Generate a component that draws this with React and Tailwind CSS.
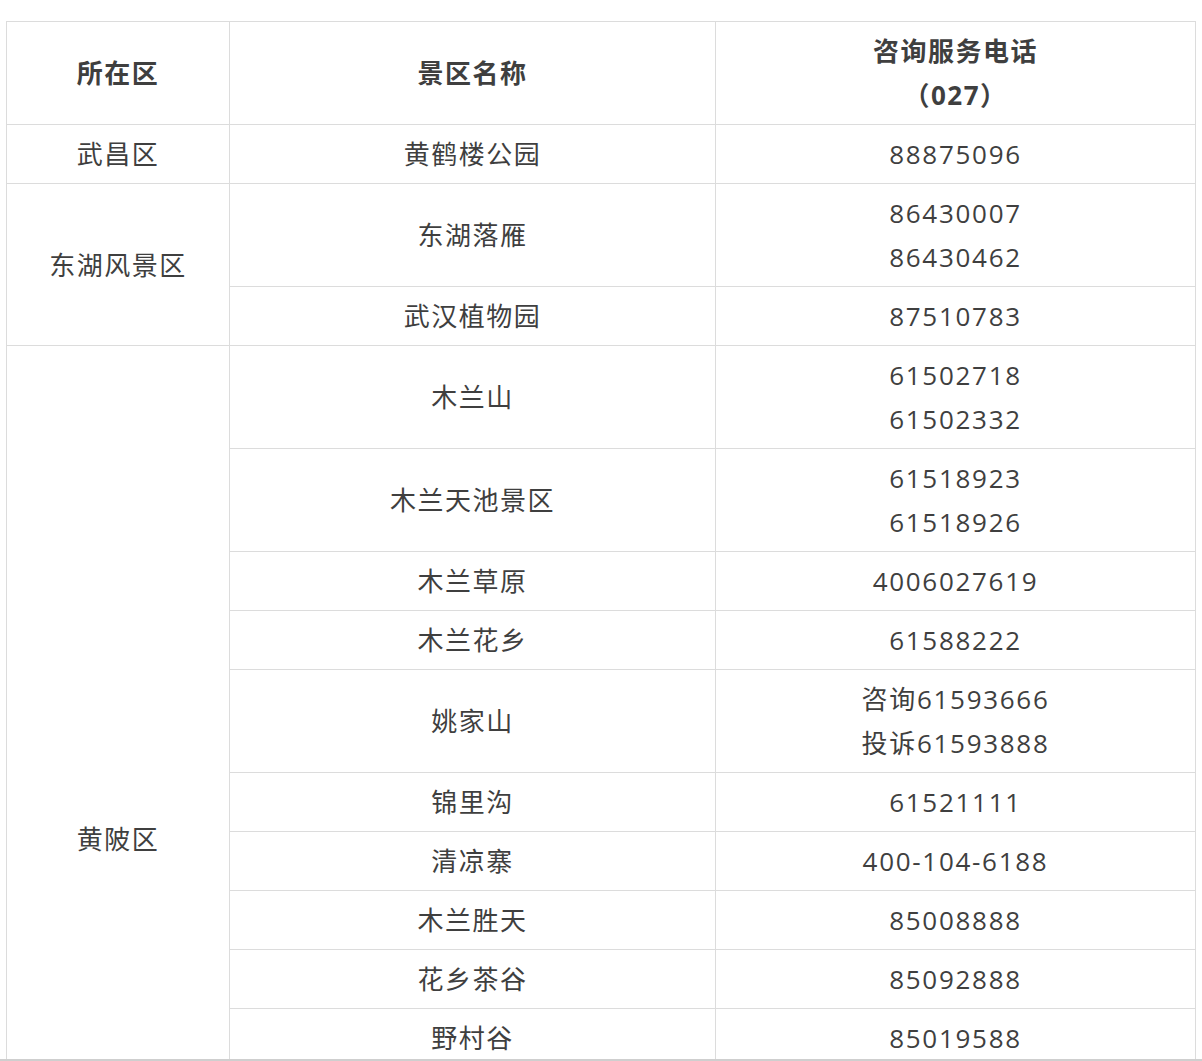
import React from "react";

const rows = [
  { name: "黄鹤楼公园", phones: ["88875096"] },
  { name: "东湖落雁", phones: ["86430007", "86430462"] },
  { name: "武汉植物园", phones: ["87510783"] },
  { name: "木兰山", phones: ["61502718", "61502332"] },
  { name: "木兰天池景区", phones: ["61518923", "61518926"] },
  { name: "木兰草原", phones: ["4006027619"] },
  { name: "木兰花乡", phones: ["61588222"] },
  { name: "姚家山", phones: ["咨询61593666", "投诉61593888"] },
  { name: "锦里沟", phones: ["61521111"] },
  { name: "清凉寨", phones: ["400-104-6188"] },
  { name: "木兰胜天", phones: ["85008888"] },
  { name: "花乡茶谷", phones: ["85092888"] },
  { name: "野村谷", phones: ["85019588"] },
];

// which row starts a district cell, and how many rows it spans
const districts = {
  0: { label: "武昌区", span: 1 },
  1: { label: "东湖风景区", span: 2 },
  3: { label: "黄陂区", span: 13 },
};

const cell = "border border-[#dcdcdc] px-2 py-[7px] text-center align-middle";

function App() {
  return (
    <div
      className="bg-white min-h-screen pt-[21px] pl-[6px] text-[#3f3f3f] text-[26px] leading-[44px] tracking-[1.5px]"
      style={{ fontFamily: '"Open Sans", "Noto Sans CJK SC", sans-serif' }}
    >
      <table className="border-collapse table-fixed w-[1189px]">
        <colgroup>
          <col className="w-[223px]" />
          <col className="w-[486px]" />
          <col className="w-[480px]" />
        </colgroup>
        <thead>
          <tr>
            <th className={`${cell} font-bold`}>所在区</th>
            <th className={`${cell} font-bold`}>景区名称</th>
            <th className={`${cell} font-bold`}>
              <p>咨询服务电话</p>
              <p>（027）</p>
            </th>
          </tr>
        </thead>
        <tbody>
          {rows.map((row, i) => (
            <tr key={row.name}>
              {districts[i] && (
                <td className={cell} rowSpan={districts[i].span}>
                  {districts[i].label}
                </td>
              )}
              <td className={cell}>{row.name}</td>
              <td className={`${cell} tracking-[1.7px]`}>
                {row.phones.map((p) => (
                  <p key={p}>{p}</p>
                ))}
              </td>
            </tr>
          ))}
          {/* rows further down the page, below the fold */}
          <tr className="h-[103px]">
            <td className={cell}></td>
            <td className={cell}></td>
          </tr>
          <tr className="h-[103px]">
            <td className={cell}></td>
            <td className={cell}></td>
          </tr>
          <tr className="h-[59px]">
            <td className={cell}></td>
            <td className={cell}></td>
          </tr>
        </tbody>
      </table>
      <div className="fixed bottom-0 left-0 right-0 h-[2px] bg-[#cfcfcf]" />
    </div>
  );
}

export default App;
